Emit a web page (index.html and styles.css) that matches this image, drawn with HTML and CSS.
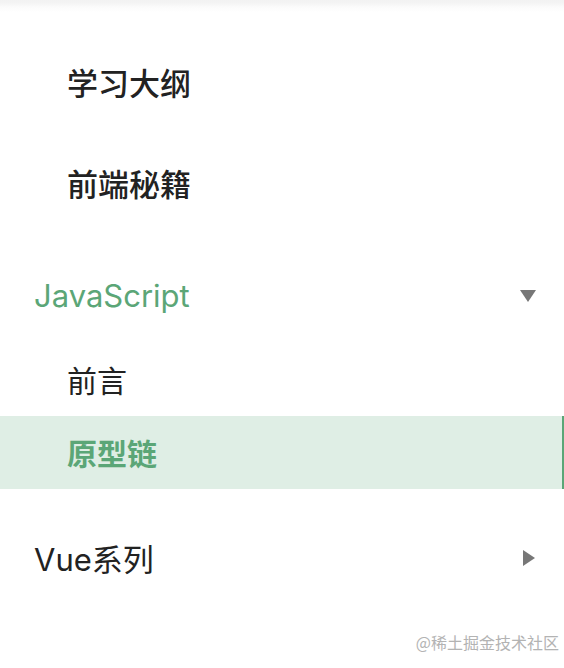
FILE: index.html
```html
<!DOCTYPE html>
<html lang="zh-CN">
<head>
<meta charset="utf-8">
<link rel="stylesheet" href="styles.css">
</head>
<body>
<div class="shade"></div>
<nav class="sidebar">
  <a class="top-item">学习大纲</a>
  <a class="top-item">前端秘籍</a>
  <div class="group open">
    <div class="group-head active-head">
      <span class="group-title">JavaScript</span>
      <span class="arrow-down"></span>
    </div>
    <a class="child">前言</a>
    <a class="child active">原型链</a>
  </div>
  <div class="group">
    <div class="group-head">
      <span class="group-title">Vue系列</span>
      <span class="arrow-right"></span>
    </div>
  </div>
</nav>
<div class="watermark">@稀土掘金技术社区</div>
</body>
</html>
```
FILE: styles.css
```css
* { box-sizing: border-box; }
html, body {
  margin: 0;
  padding: 0;
  background: #fff;
  width: 564px;
  height: 668px;
  overflow: hidden;
  font-family: "Inter", "Noto Sans CJK SC", sans-serif;
  color: #222;
}
body { position: relative; }
.shade {
  height: 12px;
  background: linear-gradient(#f2f2f2 0, #f4f4f4 3px, #fbfbfb 7px, #fff 12px);
}
.sidebar {
  display: flex;
  flex-direction: column;
  padding-top: 19px;
}
.top-item {
  display: flex;
  align-items: center;
  height: 101px;
  padding-left: 67px;
  font-size: 31px;
  font-weight: 500;
  color: #222;
}
.group { display: flex; flex-direction: column; }
.group.open { margin-top: 15px; }
.group-head {
  display: flex;
  align-items: center;
  justify-content: space-between;
  height: 95px;
  padding-left: 34px;
  padding-right: 28px;
  font-size: 31px;
  color: #222;
}
.group:not(.open) { margin-top: 21px; }
.active-head { color: #5ba677; }
.arrow-down {
  width: 0; height: 0;
  border-left: 8px solid transparent;
  border-right: 8px solid transparent;
  border-top: 12px solid #777;
}
.arrow-right {
  width: 0; height: 0;
  border-top: 8px solid transparent;
  border-bottom: 8px solid transparent;
  border-left: 12px solid #777;
  margin-right: 1px;
}
.child {
  display: flex;
  align-items: center;
  height: 73px;
  padding-left: 67px;
  padding-bottom: 2px;
  font-size: 30px;
  color: #222;
  border-right: 2px solid transparent;
}
.child.active {
  background: #dfeee5;
  color: #5ba677;
  font-weight: 700;
  border-right-color: #5ba677;
}
.watermark {
  position: absolute;
  right: 5px;
  bottom: 14px;
  font-size: 16px;
  color: #b3b3b3;
  font-family: "Noto Sans CJK SC", sans-serif;
}
```
